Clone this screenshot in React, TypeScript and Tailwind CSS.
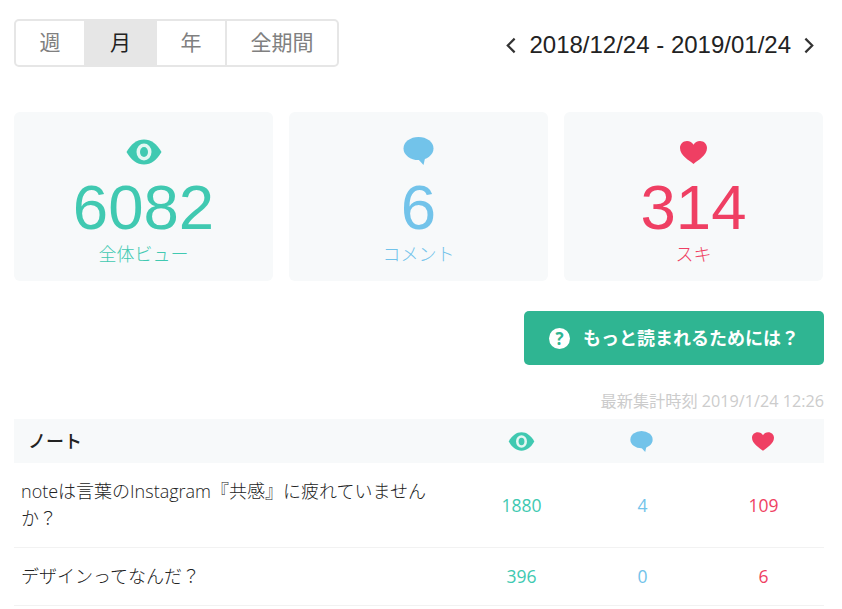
const jp = "font-['Open_Sans','Noto_Sans_CJK_JP',sans-serif]";

const EyeIcon = ({ className }: { className: string }) => (
  <svg viewBox="0 0 36 26" className={className}>
    <path fill="#40c9b1" d="M0.500 13C5 5 11 0.500 18 0.500S31 5 35.500 13C31 21 25 25.500 18 25.500S5 21 0.500 13Z" />
    <ellipse cx="18" cy="13" rx="7.500" ry="8.500" fill="#e4f7f3" />
    <ellipse cx="18" cy="13" rx="4" ry="5" fill="#40c9b1" />
  </svg>
);

const BubbleIcon = ({ className }: { className: string }) => (
  <svg viewBox="0 0 31 28" className={className}>
    <ellipse cx="15.500" cy="11.500" rx="15" ry="11.500" fill="#72c3ea" />
    <path fill="#72c3ea" d="M15 22L20.500 28L22.500 19Z" />
  </svg>
);

const HeartIcon = ({ className }: { className: string }) => (
  <svg viewBox="0 0 27 23" className={className}>
    <path
      fill="#ef3f63"
      d="M13.500 23C9.500 19.500 0 14.500 0 7C0 2.800 3.200 0 7 0C9.800 0 12.300 1.500 13.500 3.800C14.700 1.500 17.200 0 20 0C23.800 0 27 2.800 27 7C27 14.500 17.500 19.500 13.500 23Z"
    />
  </svg>
);

const Chevron = ({ dir }: { dir: "left" | "right" }) => (
  <svg viewBox="0 0 12 18" className="h-[17px] w-[11px]">
    <path
      d={dir === "left" ? "M10.500 1.500L3 9L10.500 16.500" : "M1.500 1.500L9 9L1.500 16.500"}
      fill="none"
      stroke="#333333"
      strokeWidth="2.400"
    />
  </svg>
);

const tabs = [
  { label: "週", w: "w-[68px]", active: false, divider: false },
  { label: "月", w: "w-[73px]", active: true, divider: false },
  { label: "年", w: "w-[70px]", active: false, divider: true },
  { label: "全期間", w: "w-[110px]", active: false, divider: false },
];

const rows = [
  {
    title: "noteは言葉のInstagram『共感』に疲れていませんか？",
    view: 1880,
    comment: 4,
    like: 109,
    h: "h-[85px]",
  },
  { title: "デザインってなんだ？", view: 396, comment: 0, like: 6, h: "h-[58px]" },
];

export default function App() {
  return (
    <div className="h-[609px] w-[842px] overflow-hidden bg-white">
      <div className="ml-[14px] w-[810px]">
        {/* 期間タブ */}
        <div className="flex items-center justify-between pt-[19px]">
          <div className={`flex h-[48px] rounded-[5px] border-2 border-[#e6e6e6] ${jp}`}>
            {tabs.map((tab) => (
              <div
                key={tab.label}
                className={`flex items-center justify-center text-[21px] ${tab.w} ${
                  tab.active ? "bg-[#e6e6e6] text-[#222222]" : "text-[#808080]"
                } ${tab.divider ? "border-r-2 border-[#e6e6e6]" : ""}`}
              >
                {tab.label}
              </div>
            ))}
          </div>
          <div className="mr-[9px] flex items-center gap-[13px] pt-[4px] font-['Liberation_Sans',sans-serif] text-[24px] text-[#222222]">
            <Chevron dir="left" />
            <span>2018/12/24 - 2019/01/24</span>
            <Chevron dir="right" />
          </div>
        </div>

        {/* 集計カード */}
        <div className="mt-[45px] flex gap-[16px]">
          <div className="flex h-[169px] w-[259px] flex-col items-center rounded-[6px] bg-[#f7f9fa] pt-[27px]">
            <EyeIcon className="h-[26px] w-[36px]" />
            <div className="mt-[10px] font-['Liberation_Sans',sans-serif] text-[63.500px] leading-[64px] text-[#40c9b1]">
              6082
            </div>
            <div className={`mt-[2px] text-[18px] font-light leading-[26px] text-[#40c9b1] ${jp}`}>全体ビュー</div>
          </div>
          <div className="flex h-[169px] w-[259px] flex-col items-center rounded-[6px] bg-[#f7f9fa] pt-[25px]">
            <BubbleIcon className="mr-[1px] h-[28px] w-[31px]" />
            <div className="mt-[10px] font-['Liberation_Sans',sans-serif] text-[63.500px] leading-[64px] text-[#72c3ea]">
              6
            </div>
            <div className={`mt-[2px] text-[18px] font-light leading-[26px] text-[#72c3ea] ${jp}`}>コメント</div>
          </div>
          <div className="flex h-[169px] w-[259px] flex-col items-center rounded-[6px] bg-[#f7f9fa] pt-[29px]">
            <HeartIcon className="h-[23px] w-[27px]" />
            <div className="mt-[11px] font-['Liberation_Sans',sans-serif] text-[63.500px] leading-[64px] text-[#ef3f63]">
              314
            </div>
            <div className={`mt-[2px] text-[18px] font-light leading-[26px] text-[#ef3f63] ${jp}`}>スキ</div>
          </div>
        </div>

        {/* ヘルプボタン */}
        <div className="mt-[30px] flex justify-end">
          <div className={`flex h-[54px] w-[300px] items-center justify-center gap-[13px] rounded-[5px] bg-[#2fb592] ${jp}`}>
            <span className="flex h-[21px] w-[21px] items-center justify-center rounded-full bg-white text-[17px] font-bold leading-none text-[#2fb592]">
              ?
            </span>
            <span className="text-[18px] font-bold text-white">もっと読まれるためには？</span>
          </div>
        </div>

        <div className={`mt-[24px] h-[30px] text-right text-[16.200px] leading-[24px] text-[#cccccc] ${jp}`}>
          最新集計時刻 2019/1/24 12:26
        </div>

        {/* ノート一覧 */}
        <div className="flex h-[44px] items-center bg-[#f7f9fa]">
          <div className={`flex-1 pl-[14px] text-[18px] font-medium text-[#222222] ${jp}`}>ノート</div>
          <div className="flex w-[121px] justify-center">
            <EyeIcon className="h-[19px] w-[27px]" />
          </div>
          <div className="flex w-[121px] justify-center pr-[2px]">
            <BubbleIcon className="h-[21px] w-[23px]" />
          </div>
          <div className="flex w-[121px] justify-center pr-[2px]">
            <HeartIcon className="h-[19px] w-[22px]" />
          </div>
        </div>
        {rows.map((row) => (
          <div key={row.title} className={`flex items-center border-b border-[#f2f2f2] ${row.h} ${jp}`}>
            <div className="flex-1 pl-[7px] pr-[30px] text-[18px] font-light leading-[27px] text-[#222222]">{row.title}</div>
            <div className="w-[121px] text-center text-[17.500px] text-[#40c9b1]">{row.view}</div>
            <div className="w-[121px] text-center text-[17.500px] text-[#72c3ea]">{row.comment}</div>
            <div className="w-[121px] text-center text-[17.500px] text-[#ef3f63]">{row.like}</div>
          </div>
        ))}
      </div>
    </div>
  );
}
